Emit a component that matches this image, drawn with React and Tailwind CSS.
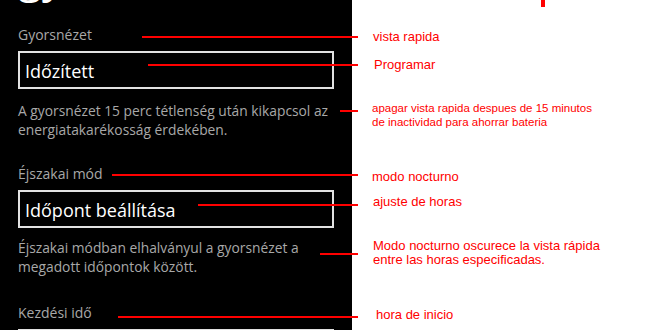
import React from "react";

const red = "bg-[#ff0000]";

function Line({ top, left, right = 358 }) {
  return (
    <div
      className={`absolute h-[2px] ${red}`}
      style={{ top: top - 1, left, width: right - left }}
    />
  );
}

export default function App() {
  return (
    <div className="relative flex w-[660px] h-[330px] overflow-hidden bg-white">
      {/* phone screen */}
      <div
        className="w-[352px] h-[330px] shrink-0 bg-black px-[18px] text-[#a8a8a8]"
        style={{ fontFamily: "'Open Sans', 'Noto Sans', sans-serif" }}
      >
        <div className="h-[8px] overflow-hidden">
          <div className="-mt-[47px] text-[44px] leading-[44px] text-white whitespace-nowrap">gyorsnézet</div>
        </div>
        <div className="mt-[17px] text-[14px] leading-[20px]">Gyorsnézet</div>
        <div className="mt-[6px] h-[38px] border-2 border-[#e2e2e2] pl-[5px] flex items-center">
          <span className="text-[18px] leading-[24px] text-white pt-[1px]">Időzített</span>
        </div>
        <div className="mt-[12px] text-[13.8px] leading-[19px] whitespace-nowrap">
          A gyorsnézet 15 perc tétlenség után kikapcsol az
          <br />
          energiatakarékosság érdekében.
        </div>
        <div className="mt-[25px] text-[14px] leading-[20px]">Éjszakai mód</div>
        <div className="mt-[6px] h-[38px] border-2 border-[#e2e2e2] pl-[5px] flex items-center">
          <span className="text-[18px] leading-[24px] text-white pt-[1px]">Időpont beállítása</span>
        </div>
        <div className="mt-[10px] text-[13.8px] leading-[19px] whitespace-nowrap">
          Éjszakai módban elhalványul a gyorsnézet a
          <br />
          megadott időpontok között.
        </div>
        <div className="mt-[27px] text-[14px] leading-[20px]">Kezdési idő</div>
        <div className="mt-[6px] h-[38px] border-2 border-[#e2e2e2]" />
      </div>

      {/* annotations */}
      <div
        className="flex flex-col pl-[21px] text-[#ff0000] text-[13px] leading-[14px] whitespace-nowrap"
        style={{ fontFamily: "'Liberation Sans', Arial, sans-serif" }}
      >
        <div className="mt-[30px]">vista rapida</div>
        <div className="mt-[14px] ml-[1px]">Programar</div>
        <div className="mt-[29px] -ml-[1px] text-[11.5px]">
          apagar vista rapida despues de 15 minutos
          <br />
          de inactividad para ahorrar bateria
        </div>
        <div className="mt-[41px] -ml-[1px]">modo nocturno</div>
        <div className="mt-[11px]">ajuste de horas</div>
        <div className="mt-[30px]">
          Modo nocturno oscurece la vista rápida
          <br />
          entre las horas especificadas.
        </div>
        <div className="mt-[41px] ml-[3px]">hora de inicio</div>
      </div>

      {/* annotation lines */}
      <Line top={37} left={142} />
      <Line top={65} left={148} />
      <Line top={111} left={340} />
      <Line top={175} left={112} />
      <Line top={205} left={198} />
      <Line top={254} left={320} />
      <Line top={317} left={118} />
      <div className={`absolute left-[541px] top-0 w-[4px] h-[7px] ${red}`} />
    </div>
  );
}
